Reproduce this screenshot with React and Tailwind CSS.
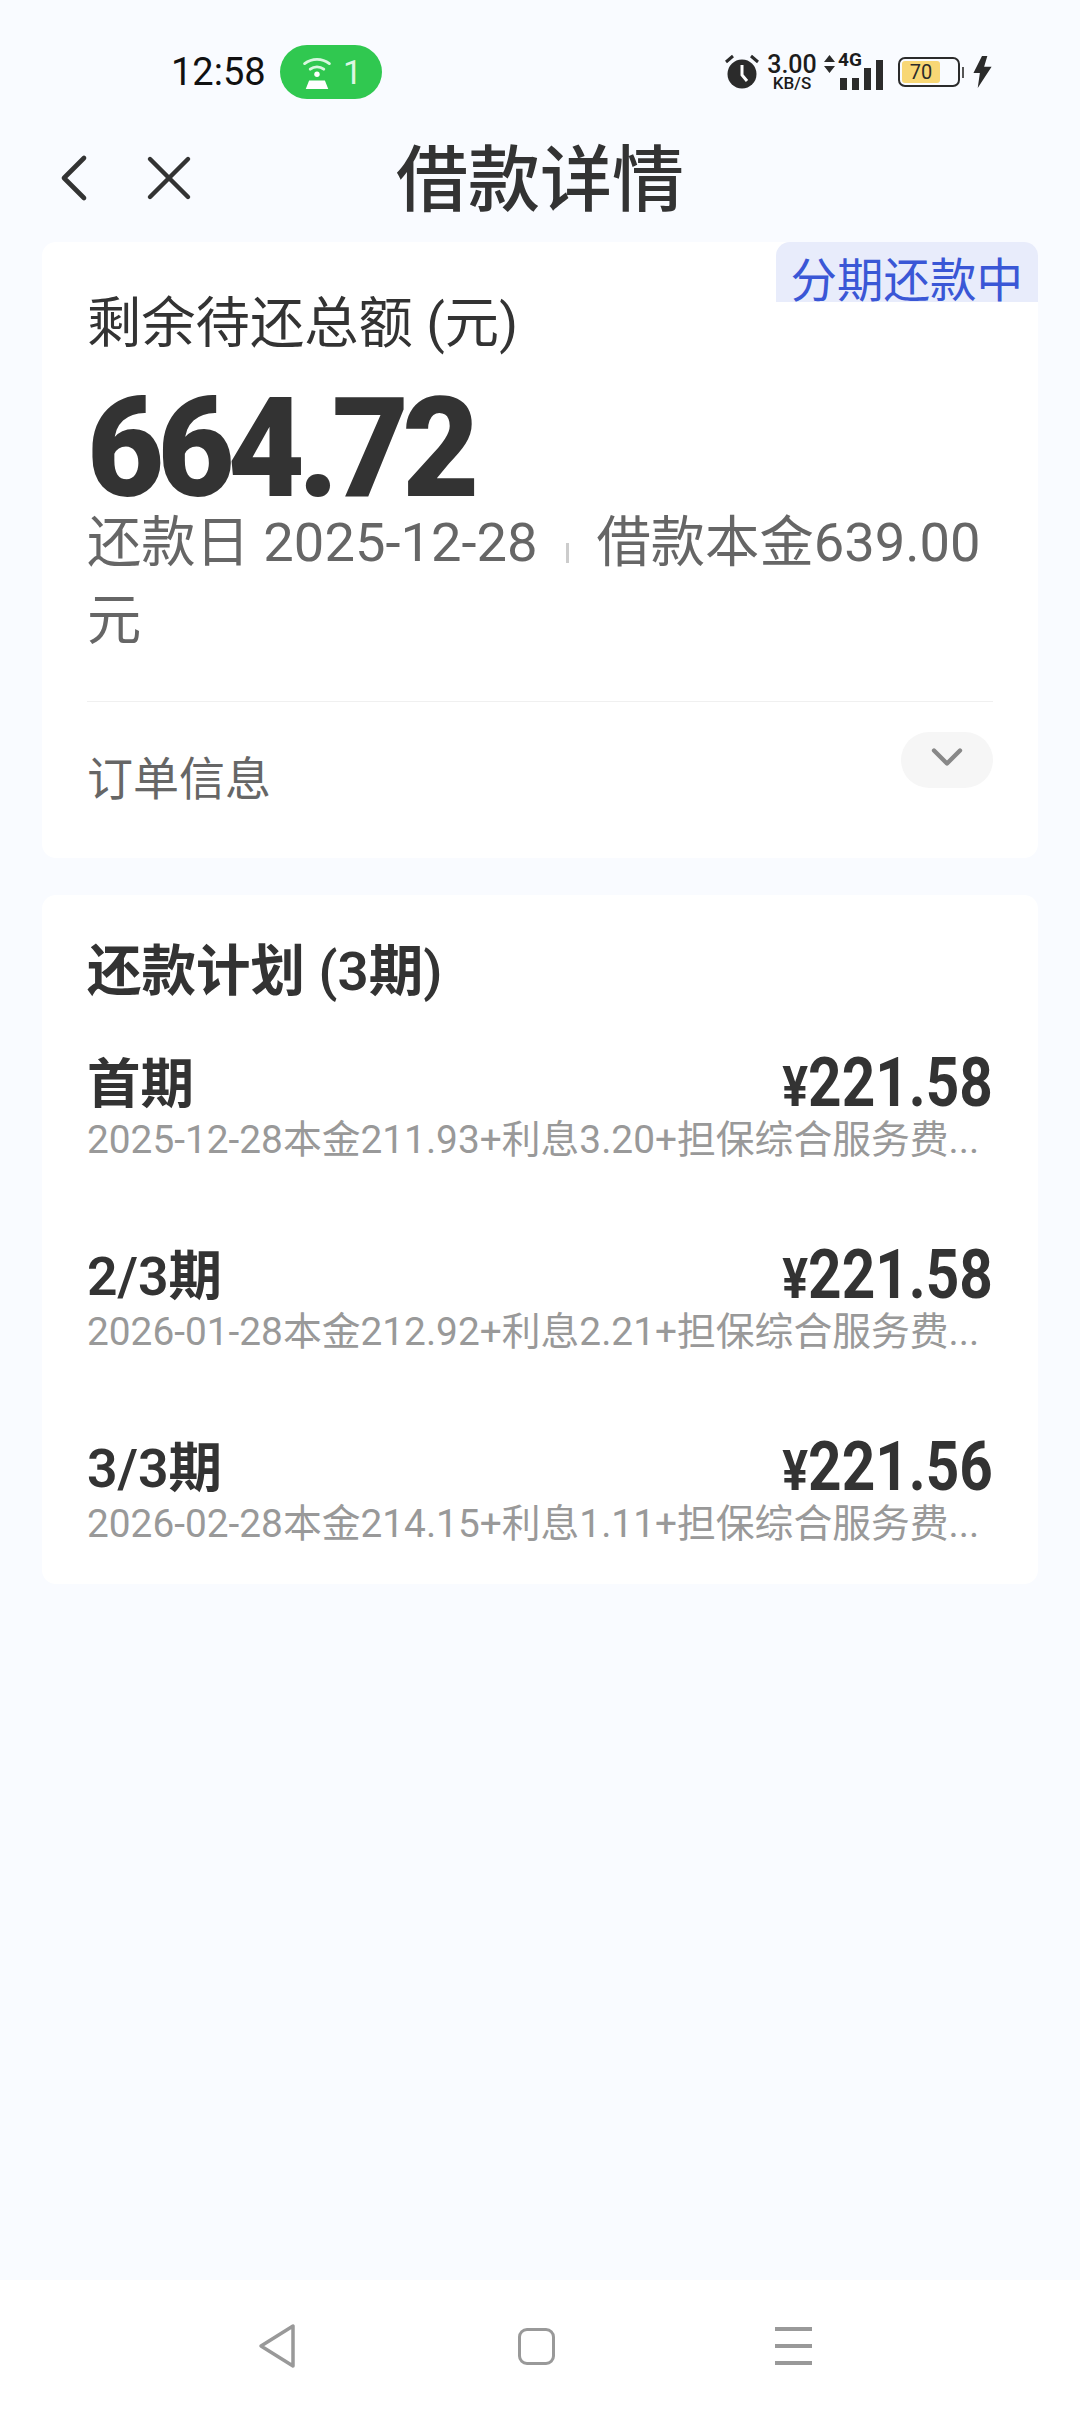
import { ChevronLeft, X, ChevronDown } from 'lucide-react';

const plans = [
  { title: '首期', amount: '221.58', desc: '2025-12-28本金211.93+利息3.20+担保综合服务费...' },
  { title: '2/3期', amount: '221.58', desc: '2026-01-28本金212.92+利息2.21+担保综合服务费...' },
  { title: '3/3期', amount: '221.56', desc: '2026-02-28本金214.15+利息1.11+担保综合服务费...' },
];

function Hotspot() {
  return (
    <svg width="36" height="36" viewBox="0 0 32 32" fill="none" stroke="#d8f7df" strokeLinecap="round">
      <path d="M5 8.5c6.5-5 15.500-5 22 0" strokeWidth="2.6" />
      <path d="M10 13.500c3.500-2.700 8.500-2.700 12 0" strokeWidth="2.600" />
      <circle cx="16" cy="18" r="2.400" fill="#fff" stroke="none" />
      <path d="M6 31l3-7.500h14l3 7.500z" fill="#fff" stroke="none" />
    </svg>
  );
}

function StatusIcons() {
  return (
    <div className="flex items-center">
      <svg width="36" height="36" viewBox="0 0 36 36">
        <circle cx="18" cy="20" r="14.500" fill="#2b2b2b" />
        <path d="M18 11v10l5 6" stroke="#fff" strokeWidth="3" fill="none" />
        <path d="M2 8l7-6M34 8l-7-6" stroke="#2b2b2b" strokeWidth="3" />
      </svg>
      <div className="ml-[6px] flex w-[52px] flex-col items-center font-medium text-[#1c1c1c]">
        <span className="text-[25px] leading-[22px]">3.00</span>
        <span className="text-[17px] leading-[15px]">KB/S</span>
      </div>
      <svg className="ml-[6px] mb-[16px]" width="11" height="18" viewBox="0 0 11 18" fill="#2b2b2b">
        <path d="M5.500 0L11 7H0zM5.500 18L0 11h11z" />
      </svg>
      <div className="relative ml-[3px] h-[36px] w-[48px]">
        <span className="absolute left-0 top-[-4px] text-[19px] font-bold leading-[20px] text-[#1c1c1c]">4G</span>
        <div className="absolute bottom-0 left-[2px] flex items-end gap-[5px]">
          <div className="h-[12px] w-[7px] bg-[#2b2b2b]" />
          <div className="h-[12px] w-[7px] bg-[#2b2b2b]" />
          <div className="h-[22px] w-[7px] bg-[#2b2b2b]" />
          <div className="h-[30px] w-[7px] bg-[#2b2b2b]" />
        </div>
      </div>
      <div className="ml-[12px] flex items-center">
        <div className="flex h-[30px] w-[62px] items-center rounded-[7px] border-2 border-[#2b2b2b] p-[2px]">
          <div className="flex h-full w-[38px] items-center justify-center rounded-[3px] bg-[#f8d775] text-[20px] leading-none text-[#2b2b2b]">70</div>
        </div>
        <div className="ml-[2px] h-[11px] w-[2px] bg-[#555]" />
      </div>
      <svg className="ml-[7px]" width="22" height="32" viewBox="0 0 20 30" fill="#2b2b2b">
        <path d="M10 0L2 16h6l-2 14L19 10h-7l3-10z" />
      </svg>
    </div>
  );
}

export default function App() {
  return (
    <div className="flex h-[2412px] w-[1080px] flex-col overflow-hidden bg-[#f9fbff] font-['Roboto','Noto_Sans_CJK_SC',sans-serif]">
      {/* Status bar */}
      <div className="flex h-[144px] items-center justify-between pl-[171px] pr-[87px]">
        <div className="flex items-center">
          <span className="text-[38px] leading-none text-[#111]">12:58</span>
          <div className="ml-[14px] flex h-[54px] w-[102px] items-center justify-center gap-[8px] rounded-full bg-[#30c850]">
            <Hotspot />
            <span className="text-[34px] leading-none text-[#dcf7e2]">1</span>
          </div>
        </div>
        <StatusIcons />
      </div>

      {/* Header */}
      <div className="relative flex h-[68px] items-center justify-center pt-[5px]">
        <div className="absolute inset-y-0 left-[34px] flex items-center gap-[17px]">
          <ChevronLeft size={80} strokeWidth={1.4} className="text-[#333]" />
          <X size={76} strokeWidth={1.4} className="text-[#333]" />
        </div>
        <h1 className="text-[72px] font-medium leading-none text-[#333]">借款详情</h1>
      </div>

      {/* Summary */}
      <div className="relative mx-[42px] mt-[30px] h-[616px] rounded-[14px] bg-white px-[45px] pt-[45px]">
        <div className="absolute right-0 top-0 h-[60px] rounded-t-[14px] bg-[#e8ecfb] px-[15px] pt-[8px] text-[46.500px] leading-[62px] text-[#3a57d6]">分期还款中</div>
        <div className="text-[54.300px] leading-[74px] text-[#333]">剩余待还总额 (元)</div>
        <div className="mt-[13px] h-[130px] origin-left scale-x-[0.95] text-[140px] font-black leading-[148px] tracking-[-7px] text-[#333]">664.72</div>
        <div className="text-[54.300px] leading-[78px] text-[#666]">
          还款日 2025-12-28
          <span className="mx-[28px] inline-block h-[20px] w-[3px] bg-[#ccc] align-[-2px]" />
          借款本金639.00 元
        </div>
        <div className="mt-[41px] border-t border-[#f0f0f0]">
          <div className="flex items-start justify-between pt-[30px]">
            <span className="pt-[12px] text-[46px] leading-[70px] text-[#666]">订单信息</span>
            <div className="flex h-[56px] w-[92px] items-center justify-center rounded-full bg-[#f6f6f6] pb-[6px]">
              <ChevronDown size={52} strokeWidth={2} className="text-[#888]" />
            </div>
          </div>
        </div>
      </div>

      {/* Plan */}
      <div className="mx-[42px] mt-[37px] rounded-[14px] bg-white px-[45px] pb-[38px] pt-[43px]">
        <div className="text-[54.500px] font-semibold leading-[66px] text-[#333]">还款计划 (3期)</div>
        <div className="mt-[48px] flex flex-col gap-[82px]">
          {plans.map((plan) => (
            <div key={plan.desc} className="h-[110px]">
              <div className="flex h-[66px] items-center justify-between">
                <span className="text-[53.500px] font-semibold leading-[66px] text-[#333]">{plan.title}</span>
                <span className="flex origin-right scale-x-[0.86] items-baseline font-bold leading-[66px] text-[#333]">
                  <span className="text-[56px]">¥</span>
                  <span className="text-[68px]">{plan.amount}</span>
                </span>
              </div>
              <div className="whitespace-nowrap text-[38.800px] leading-[44px] text-[#999]">{plan.desc}</div>
            </div>
          ))}
        </div>
      </div>

      {/* Nav bar */}
      <div className="mt-auto flex h-[132px] items-center justify-center gap-[220px] bg-white pr-[10px]">
        <svg width="40" height="46" viewBox="0 0 40 46" fill="none" stroke="#999" strokeWidth="3.500" strokeLinejoin="round">
          <path d="M3 23L35 3v40z" />
        </svg>
        <div className="h-[37px] w-[37px] rounded-[9px] border-[3.5px] border-[#999]" />
        <div className="flex h-[38px] w-[37px] flex-col justify-between">
          <div className="h-[4px] bg-[#999]" />
          <div className="h-[4px] bg-[#999]" />
          <div className="h-[4px] bg-[#999]" />
        </div>
      </div>
    </div>
  );
}
